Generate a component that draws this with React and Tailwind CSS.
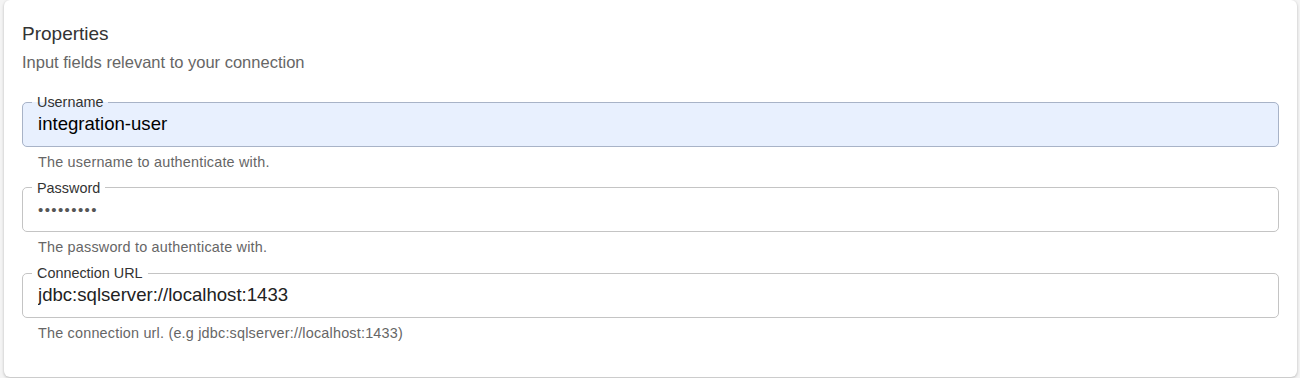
import React from 'react';

const fields = [
    {
        label: 'Username',
        value: 'integration-user',
        type: 'text',
        helper: 'The username to authenticate with.',
        autofilled: true,
    },
    {
        label: 'Password',
        value: 'integrati',
        type: 'password',
        helper: 'The password to authenticate with.',
    },
    {
        label: 'Connection URL',
        value: 'jdbc:sqlserver://localhost:1433',
        type: 'text',
        helper: 'The connection url. (e.g jdbc:sqlserver://localhost:1433)',
    },
];

const Field = ({ label, value, type, helper, autofilled }) => (
    <div>
        <fieldset
            className={`rounded-[5px] border px-[15px] pb-[8.5px] ${autofilled ? 'bg-[#e8f0fe] border-[#a8b3c7]' : 'bg-white border-[#c4c4c4]'}`}
        >
            <legend className="ml-[-6px] px-[5px] text-[14.4px] leading-[16px] text-[#333]">{label}</legend>
            <input
                type={type}
                readOnly
                defaultValue={value}
                className={`block w-full bg-transparent outline-none h-[27px] ${type === 'password' ? 'text-[15px] text-[#555] tracking-[1.4px]' : 'text-[18.6px] text-[#222]'} ${autofilled ? 'text-black' : ''}`}
            />
        </fieldset>
        <p className="mt-[5px] pl-[16px] text-[14.4px] leading-[20px] tracking-[0.2px] text-[#666]">{helper}</p>
    </div>
);

const App = () => {
    return (
        <div className="min-h-[378px] bg-[#f4f4f4] pl-[4px] pr-[3px] pb-[1px] font-['Liberation_Sans',Arial,sans-serif]">
            <div className="h-[377px] bg-white rounded-[6px] shadow-[0_1px_3px_rgba(0,0,0,0.25)] px-[18px] pt-[22px]">
                <h2 className="text-[19px] leading-[24px] text-[#333]">Properties</h2>
                <p className="mt-[5px] text-[16.5px] leading-[22px] text-[#666]">Input fields relevant to your connection</p>
                <div className="mt-[21px] flex flex-col gap-[8px]">
                    {fields.map((f) => (
                        <Field key={f.label} {...f} />
                    ))}
                </div>
            </div>
        </div>
    );
};

export default App;
